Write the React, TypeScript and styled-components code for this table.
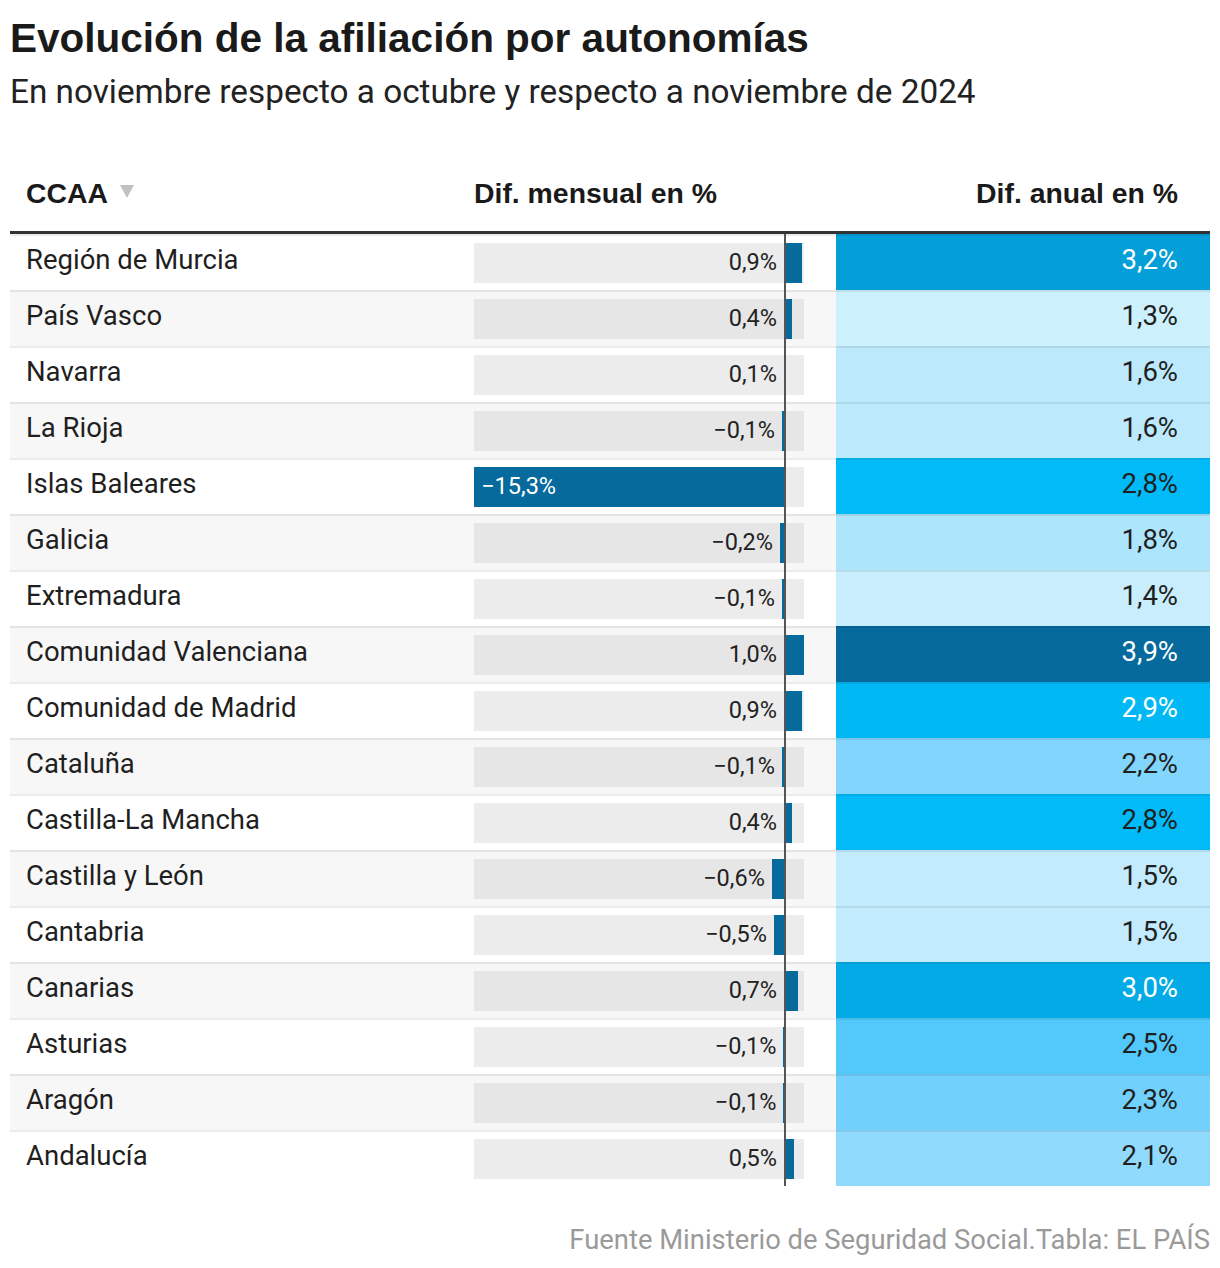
import styled, { createGlobalStyle } from "styled-components";

const GlobalStyle = createGlobalStyle`
  body {
    margin: 0;
    background: #fff;
    font-family: Roboto, "Liberation Sans", sans-serif;
    color: #1f1f1f;
  }
`;

type Row = { name: string; month: number; year: number; color: string };

const rows: Row[] = [
  { name: "Región de Murcia", month: 0.9, year: 3.2, color: "#049ed9" },
  { name: "País Vasco", month: 0.4, year: 1.3, color: "#cdf0fd" },
  { name: "Navarra", month: 0.1, year: 1.6, color: "#bde9fc" },
  { name: "La Rioja", month: -0.1, year: 1.6, color: "#bde9fc" },
  { name: "Islas Baleares", month: -15.3, year: 2.8, color: "#00bbf8" },
  { name: "Galicia", month: -0.2, year: 1.8, color: "#ade5fc" },
  { name: "Extremadura", month: -0.1, year: 1.4, color: "#c8eefd" },
  { name: "Comunidad Valenciana", month: 1.0, year: 3.9, color: "#066a9c" },
  { name: "Comunidad de Madrid", month: 0.9, year: 2.9, color: "#00b8f4" },
  { name: "Cataluña", month: -0.1, year: 2.2, color: "#82d6fd" },
  { name: "Castilla-La Mancha", month: 0.4, year: 2.8, color: "#00bbf8" },
  { name: "Castilla y León", month: -0.6, year: 1.5, color: "#c2ebfd" },
  { name: "Cantabria", month: -0.5, year: 1.5, color: "#c2ebfd" },
  { name: "Canarias", month: 0.7, year: 3.0, color: "#03abe6" },
  { name: "Asturias", month: -0.03, year: 2.5, color: "#52c8fb" },
  { name: "Aragón", month: -0.03, year: 2.3, color: "#72d1fc" },
  { name: "Andalucía", month: 0.5, year: 2.1, color: "#8fdafd" },
];

const SCALE = 20.25;

const fmt = (n: number) => {
  const s = Math.abs(n).toFixed(1).replace(".", ",");
  return (n < 0 ? "−" : "") + s + "%";
};

// the two -0,1 rows whose bars don't show
const shownValue = (v: number) => (Math.abs(v) < 0.05 ? -0.1 : v);

function App() {
  return (
    <>
      <GlobalStyle />
      <Page>
        <Title>Evolución de la afiliación por autonomías</Title>
        <Subtitle>
          En noviembre respecto a octubre y respecto a noviembre de 2024
        </Subtitle>
        <Table>
          <HeadRow>
            <HeadCell>
              CCAA
              <SortArrow />
            </HeadCell>
            <HeadCell>Dif. mensual en %</HeadCell>
            <HeadCell $right>Dif. anual en %</HeadCell>
          </HeadRow>
          {rows.map((r, i) => {
            const w = Math.abs(r.month) * SCALE;
            const inside = w > 120;
            const label = fmt(shownValue(r.month));
            return (
              <BodyRow key={r.name} $shaded={i % 2 === 1}>
                <NameCell>{r.name}</NameCell>
                <BarCell>
                  <NegPart $shaded={i % 2 === 1}>
                    {!inside && <BarLabel>{label}</BarLabel>}
                    {r.month < 0 && (
                      <Bar style={{ width: w }}>
                        {inside && <InsideLabel>{label}</InsideLabel>}
                      </Bar>
                    )}
                  </NegPart>
                  <ZeroLine />
                  <PosPart $shaded={i % 2 === 1}>
                    {r.month > 0 && <Bar style={{ width: w - 2 }} />}
                  </PosPart>
                </BarCell>
                <YearCell $bg={r.color} $light={r.year >= 2.9}>
                  {fmt(r.year)}
                </YearCell>
              </BodyRow>
            );
          })}
        </Table>
        <Footer>Fuente Ministerio de Seguridad Social.Tabla: EL PAÍS</Footer>
      </Page>
    </>
  );
}

export default App;

const Page = styled.div`
  width: 1200px;
  padding: 14px 10px 20px;
`;

const Title = styled.h1`
  margin: 0;
  font-family: "Liberation Sans", Arial, sans-serif;
  font-size: 40.5px;
  line-height: 48px;
  font-weight: 700;
  color: #1a1a1a;
`;

const Subtitle = styled.p`
  margin: 9px 0 0;
  font-size: 33.3px;
  line-height: 42px;
  font-weight: 400;
  color: #222;
`;

const Table = styled.div`
  margin-top: 42px;
  display: flex;
  flex-direction: column;
`;

const HeadRow = styled.div`
  display: grid;
  grid-template-columns: 464px 362px 374px;
  height: 76px;
  align-items: center;
  border-bottom: 3px solid #333;
`;

const HeadCell = styled.div<{ $right?: boolean }>`
  display: flex;
  align-items: center;
  justify-content: ${(p) => (p.$right ? "flex-end" : "flex-start")};
  font-family: "Liberation Sans", Arial, sans-serif;
  font-size: 28.4px;
  font-weight: 700;
  color: #1a1a1a;
  padding: 0 ${(p) => (p.$right ? "32px" : "0")} 0 ${(p) => (p.$right ? "0" : "16px")};
  &:nth-child(2) {
    padding-left: 0;
  }
`;

const SortArrow = styled.span`
  width: 0;
  height: 0;
  margin: -4px 0 0 12px;
  border-left: 7px solid transparent;
  border-right: 7px solid transparent;
  border-top: 13px solid #c2c2c2;
`;

const BodyRow = styled.div<{ $shaded: boolean }>`
  display: grid;
  grid-template-columns: 464px 362px 374px;
  height: 56px;
  background: ${(p) => (p.$shaded ? "#f7f7f7" : "#fff")};
  & > * {
    border-top: 2px solid rgba(0, 0, 0, 0.075);
  }
  &:first-of-type > * {
    border-top: 0;
  }
`;

const NameCell = styled.div`
  display: flex;
  align-items: center;
  padding: 0 0 7px 16px;
  font-size: 27.5px;
  color: #1f1f1f;
`;

const BarCell = styled.div`
  display: flex;
  align-items: center;
  padding-right: 32px;
`;

const NegPart = styled.div<{ $shaded: boolean }>`
  width: 310px;
  height: 40px;
  display: flex;
  align-items: center;
  justify-content: flex-end;
  background: ${(p) => (p.$shaded ? "#e6e6e6" : "#ececec")};
`;

const PosPart = styled.div<{ $shaded: boolean }>`
  width: 18px;
  height: 40px;
  display: flex;
  background: ${(p) => (p.$shaded ? "#e6e6e6" : "#ececec")};
`;

const ZeroLine = styled.div`
  width: 2px;
  align-self: stretch;
  margin-top: -2px;
  background: #555;
  ${BodyRow}:first-of-type & {
    margin-top: 0;
  }
`;

const Bar = styled.div`
  height: 40px;
  background: #066a9c;
  display: flex;
  align-items: center;
  flex-shrink: 0;
`;

const BarLabel = styled.span`
  font-size: 23.5px;
  color: #222;
  padding: 0 7px 2px 0;
  white-space: nowrap;
`;

const InsideLabel = styled.span`
  font-size: 23.5px;
  color: #fff;
  padding: 0 0 2px 7px;
  white-space: nowrap;
`;

const YearCell = styled.div<{ $bg: string; $light: boolean }>`
  display: flex;
  align-items: center;
  justify-content: flex-end;
  padding: 0 32px 7px 0;
  font-size: 27.5px;
  background: ${(p) => p.$bg};
  color: ${(p) => (p.$light ? "#fff" : "#1f1f1f")};
`;

const Footer = styled.div`
  margin-top: 38px;
  text-align: right;
  font-size: 27.4px;
  color: #9a9a9a;
`;
